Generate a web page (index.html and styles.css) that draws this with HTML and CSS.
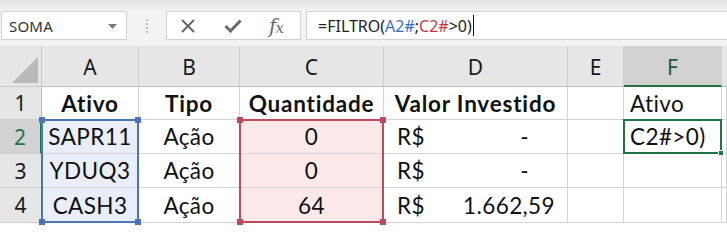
FILE: index.html
```html
<!DOCTYPE html>
<html lang="pt">
<head>
<meta charset="utf-8">
<link rel="stylesheet" href="styles.css">
</head>
<body>
<div class="app">
  <div class="toolbar">
    <div class="namebox">
      <span class="name">SOMA</span>
      <svg class="dd" width="9" height="5" viewBox="0 0 9 5"><path d="M0 0 L9 0 L4.5 5 Z" fill="#7a7a7a"/></svg>
    </div>
    <div class="sep"><span></span><span></span><span></span><span></span></div>
    <div class="buttons">
      <svg class="ic" width="16" height="16" viewBox="0 0 16 16"><path d="M2 2 L14 14 M14 2 L2 14" stroke="#6a6a6a" stroke-width="2" fill="none"/></svg>
      <svg class="ic" width="18" height="14" viewBox="0 0 18 14"><path d="M1.5 7 L6.5 12 L16.5 1.5" stroke="#6a6a6a" stroke-width="3" fill="none"/></svg>
      <span class="fx">f<i>x</i></span>
    </div>
    <div class="formula">=FILTRO(<span class="ref-blue">A2#</span>;<span class="ref-red">C2#</span>&gt;0)<span class="caret"></span></div>
  </div>
  <div class="sheet-wrap">
    <div class="sheet">
      <div class="corner"><svg width="26" height="26" viewBox="0 0 26 26"><path d="M26 0 L26 26 L0 26 Z" fill="#b9b9b9"/></svg></div>
      <div class="ch">A</div>
      <div class="ch">B</div>
      <div class="ch">C</div>
      <div class="ch">D</div>
      <div class="ch">E</div>
      <div class="ch ch-sel">F</div>
      <div class="ch ch-rest"></div>

      <div class="rh">1</div>
      <div class="c b">Ativo</div>
      <div class="c b">Tipo</div>
      <div class="c b">Quantidade</div>
      <div class="c b">Valor Investido</div>
      <div class="c"></div>
      <div class="c l">Ativo</div>
      <div class="c"></div>

      <div class="rh rh-sel">2</div>
      <div class="c blue">SAPR11</div>
      <div class="c">Ação</div>
      <div class="c red">0</div>
      <div class="c acc"><span>R$</span><span class="dash">-</span></div>
      <div class="c"></div>
      <div class="c l">C2#&gt;0)</div>
      <div class="c"></div>

      <div class="rh">3</div>
      <div class="c blue">YDUQ3</div>
      <div class="c">Ação</div>
      <div class="c red">0</div>
      <div class="c acc"><span>R$</span><span class="dash">-</span></div>
      <div class="c"></div>
      <div class="c"></div>
      <div class="c"></div>

      <div class="rh">4</div>
      <div class="c blue">CASH3</div>
      <div class="c">Ação</div>
      <div class="c red">64</div>
      <div class="c acc"><span>R$</span><span>1.662,59</span></div>
      <div class="c"></div>
      <div class="c"></div>
      <div class="c"></div>
    </div>
    <div class="overlay">
      <div class="range range-blue"><i class="h tl"></i><i class="h tr"></i><i class="h bl"></i><i class="h br"></i></div>
      <div class="range range-red"><i class="h tl"></i><i class="h tr"></i><i class="h bl"></i><i class="h br"></i></div>
      <div class="active"><i class="fill"></i></div>
    </div>
  </div>
</div>
</body>
</html>
```

FILE: styles.css
```css
* { box-sizing: border-box; }
html, body { margin: 0; padding: 0; }
body {
  width: 727px;
  height: 225px;
  overflow: hidden;
  background: #ffffff;
  font-family: "Lato", "Noto Sans", sans-serif;
  color: #111;
}
.app { display: flex; flex-direction: column; }

.toolbar {
  height: 46px;
  background: linear-gradient(#e4e4e4 0px, #efefef 9px, #f3f3f3 12px);
  display: flex;
  align-items: flex-start;
  padding-top: 11px;
  font-family: "Noto Sans", "Open Sans", sans-serif;
}
.namebox {
  margin-left: 1px;
  width: 126px;
  height: 29px;
  background: #fff;
  border: 1px solid #d2d2d2;
  display: flex;
  align-items: center;
  justify-content: space-between;
  padding: 0 9px 0 7px;
}
.name { font-size: 15px; color: #333; letter-spacing: 0.2px; }
.dd { margin-top: 1px; }
.sep {
  width: 39px;
  height: 29px;
  display: flex;
  flex-direction: column;
  align-items: center;
  justify-content: center;
  gap: 2px;
}
.sep span { width: 2px; height: 2px; background: #bdbdbd; }
.buttons {
  width: 135px;
  height: 29px;
  background: #fff;
  border: 1px solid #d2d2d2;
  display: flex;
  align-items: center;
  padding-left: 13px;
  gap: 29px;
}
.ic { display: block; }
.buttons .ic:nth-child(2) { margin-left: -1px; }
.fx {
  font-family: "DejaVu Serif", "Liberation Serif", serif;
  font-style: italic;
  font-size: 20px;
  color: #6a6a6a;
  margin-left: -2px;
  letter-spacing: -1px;
}
.fx i { font-size: 15px; }
.formula {
  margin-left: 5px;
  flex: 1;
  height: 29px;
  background: #fff;
  border: 1px solid #d2d2d2;
  border-right: none;
  display: flex;
  align-items: center;
  padding-left: 11px;
  font-size: 16px;
  color: #222;
}
.ref-blue { color: #3a6fc4; }
.ref-red { color: #c8363f; }
.caret { display: inline-block; width: 1px; height: 21px; background: #111; margin-left: 1px; }

.sheet-wrap { position: relative; }
.sheet, .overlay {
  display: grid;
  grid-template-columns: 42px 97px 101px 144px 184px 56px 98px 1fr;
  grid-template-rows: 41px 33px 34px 34px 35px;
}
.sheet { background: #fff; }
.overlay {
  position: absolute;
  inset: 0;
  pointer-events: none;
}
.corner {
  background: #e6e6e6;
  border-right: 1px solid #c9c9c9;
  border-bottom: 1px solid #c9c9c9;
  display: flex;
  align-items: flex-end;
  justify-content: flex-end;
  padding: 0 3px 3px 0;
}
.ch {
  background: #e6e6e6;
  border-right: 1px solid #cfcfcf;
  border-bottom: 1px solid #bdbdbd;
  display: flex;
  align-items: center;
  justify-content: center;
  font-family: "Noto Sans", "Open Sans", sans-serif;
  font-size: 21px;
  color: #1a1a1a;
  padding-top: 2px;
}
.ch-sel {
  background: #d2d2d2;
  border-bottom: 2px solid #217346;
  color: #1d5c3a;
}
.ch-rest { border-right: none; }
.rh {
  background: #e6e6e6;
  border-right: 1px solid #bdbdbd;
  border-bottom: 1px solid #cfcfcf;
  display: flex;
  align-items: center;
  justify-content: center;
  font-family: "Noto Sans", "Open Sans", sans-serif;
  font-size: 21px;
  color: #1a1a1a;
}
.rh-sel {
  background: #d2d2d2;
  border-right: 2px solid #217346;
  color: #217346;
}
.c {
  border-right: 1px solid #d4d4d4;
  border-bottom: 1px solid #d4d4d4;
  display: flex;
  align-items: center;
  justify-content: center;
  font-size: 22.5px;
  letter-spacing: 0.4px;
  color: #111;
  white-space: nowrap;
}
.c.b { font-weight: 700; letter-spacing: 0.8px; }
.c.l { justify-content: flex-start; padding-left: 6px; }
.c.acc { justify-content: space-between; padding: 0 12px 0 13px; }
.c.acc .dash { margin-right: 26px; }
.blue { background: #e9eef8; }
.red { background: #fbe9ea; }

.range {
  grid-column: 2;
  grid-row: 3 / 6;
  border: 2px solid #4a73b8;
  margin: -1px 0 0 -1px;
  position: relative;
}
.range-red { grid-column: 4; border-color: #bd4a5c; }
.h {
  position: absolute;
  width: 6px;
  height: 6px;
}
.range-blue .h { background: #4a73b8; }
.range-red .h { background: #bd4a5c; }
.tl { left: -4px; top: -4px; }
.tr { right: -4px; top: -4px; }
.bl { left: -4px; bottom: -4px; }
.br { right: -4px; bottom: -4px; }
.active {
  grid-column: 7;
  grid-row: 3;
  border: 2px solid #217346;
  margin: -1px 0 0 -1px;
  position: relative;
}
.fill {
  position: absolute;
  right: -4px;
  bottom: -4px;
  width: 6px;
  height: 6px;
  background: #217346;
  border: 1px solid #fff;
}
```
